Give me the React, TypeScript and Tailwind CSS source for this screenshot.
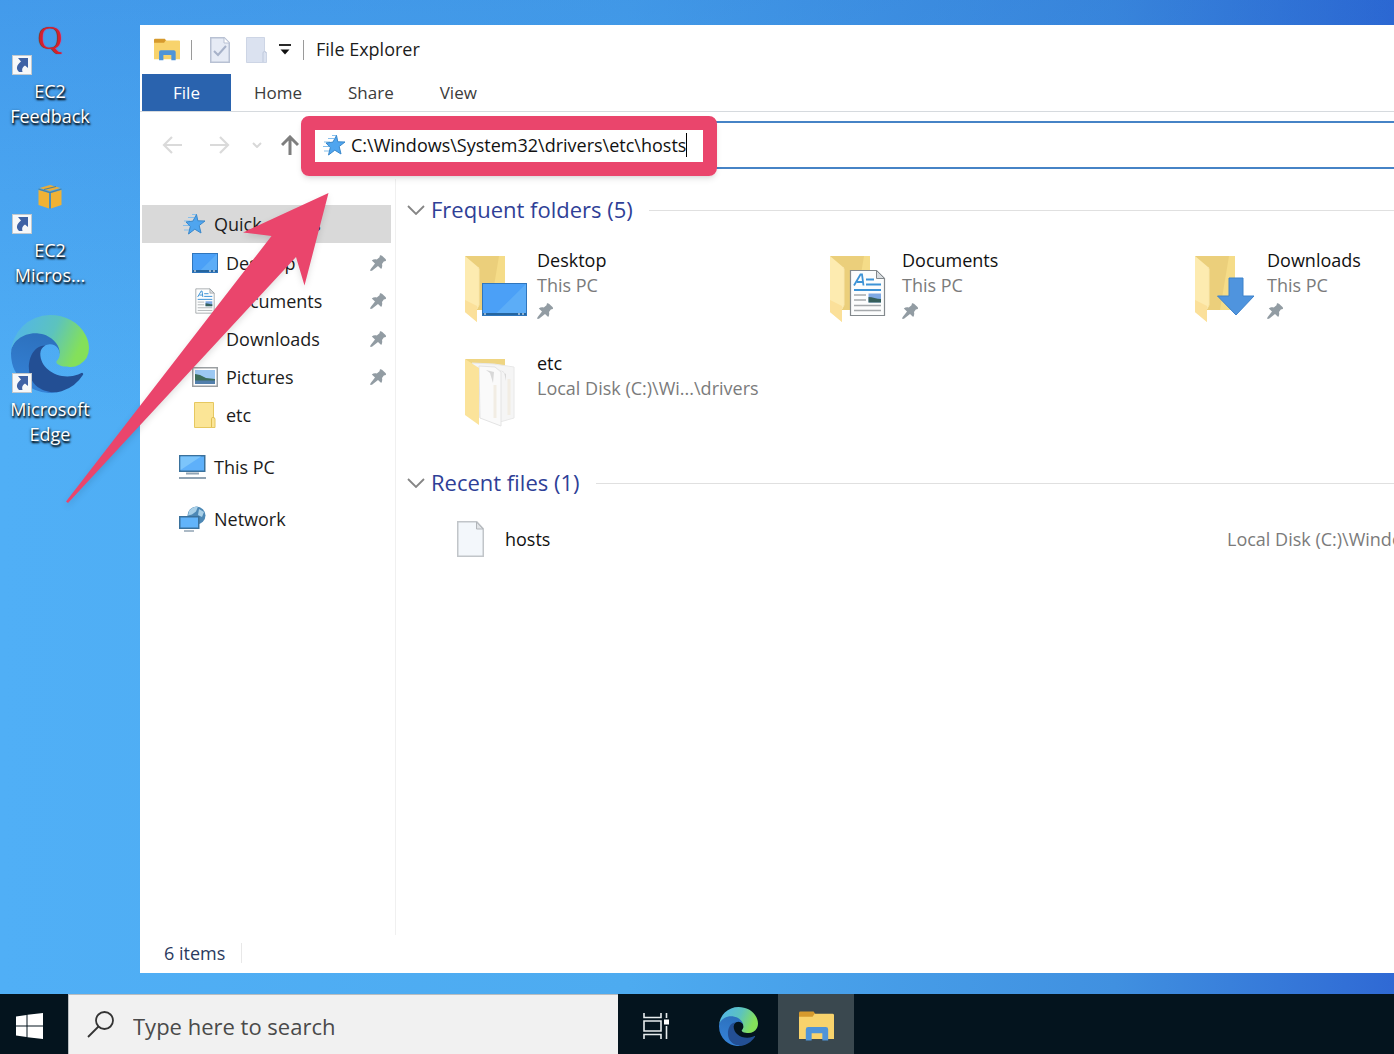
import type { ReactNode } from "react";

const tabs = ["Home", "Share", "View"];

function ShortcutBadge() {
  return (
    <svg className="absolute bottom-0 left-px w-5 h-5" viewBox="0 0 20 20">
      <rect x="0.5" y="0.5" width="19" height="19" fill="#f6f8fa" stroke="#c3c9ce" />
      <path d="M6 3h10v10l-3-2.500c-2.500 1.500-3.500 3.500-2.500 6.500H7C4 14 4 10.500 9 6.500z" fill="#3f62a5" />
    </svg>
  );
}

function EdgeLogo({ className, id }: { className: string; id: string }) {
  return (
    <svg className={className} viewBox="0 0 256 256">
      <defs>
        <linearGradient id={`${id}-top`} x1="0" y1="0.3" x2="1" y2="0.6">
          <stop offset="0" stopColor="#52b5ea" />
          <stop offset="0.5" stopColor="#5cc3be" />
          <stop offset="0.900" stopColor="#84e05a" />
        </linearGradient>
        <linearGradient id={`${id}-left`} x1="0.6" y1="0" x2="0.4" y2="1">
          <stop offset="0" stopColor="#2c6fbb" />
          <stop offset="1" stopColor="#3583d8" />
        </linearGradient>
      </defs>
      <path
        fill={`url(#${id}-left)`}
        d="M105.7 241.4a79.2 79.2 0 0 1-22.7-21.3 80.7 80.7 0 0 1 29.5-120c3.2-1.5 8.5-4.1 15.6-4a32.4 32.4 0 0 1 25.7 13 31.9 31.9 0 0 1 6.3 18.7c0-.2 24.5-79.6-80-79.6-43.9 0-80 41.7-80 78.2a130.2 130.2 0 0 0 12.1 56 128 128 0 0 0 156.4 67 75.5 75.5 0 0 1-62.8-8z"
      />
      <path
        fill="#234f94"
        d="M231 190.5c-3.4 1.8-6.900 3.400-10.500 4.700a101.900 101.900 0 0 1-35.900 6.400c-47.300 0-88.500-32.500-88.500-74.300a31.500 31.500 0 0 1 16.400-27.300c-42.800 1.800-53.800 46.400-53.800 72.500 0 73.900 68.100 81.400 82.800 81.400 7.900 0 19.800-2.300 27-4.600l1.300-.4a128.300 128.300 0 0 0 66.600-52.800 4 4 0 0 0-5.400-5.600z"
      />
      <path
        fill={`url(#${id}-top)`}
        d="M152.300 148.900c-.9 1-3.400 2.500-3.400 5.600 0 2.600 1.700 5.200 4.800 7.300 14.300 10 41.400 8.600 41.500 8.600a59.600 59.600 0 0 0 30.300-8.300 61.400 61.400 0 0 0 30.400-52.900c.3-22.400-8-37.300-11.300-43.900C223.500 23.900 177.700 0 128 0A128 128 0 0 0 0 126.200c.5-36.500 36.800-66 80-66 3.500 0 23.500.3 42 10.100 16.300 8.600 24.900 18.900 30.800 29.200 6.200 10.700 7.300 24.100 7.300 29.500 0 5.300-2.700 13.300-7.900 19.900z"
      />
    </svg>
  );
}

function ExplorerIcon({ className }: { className: string }) {
  return (
    <svg className={className} viewBox="0 0 36 30">
      <path d="M0 1.500Q0 0 1.500 0H15l2 3v4H0z" fill="#d69a2d" />
      <path d="M0 5.500h14l2-3h18.500Q36 2.500 36 4v24.500H0z" fill="#f8d36c" />
      <path d="M7 30V18.500Q7 16 9.500 16h18Q30 16 30 18.500V30h-6v-7.500H13V30z" fill="#4f94d8" />
    </svg>
  );
}

function StarIcon() {
  return (
    <svg className="w-6 h-6 shrink-0" viewBox="0 0 24 24">
      <path d="M2 9h6M1 13.500h6M2 18h5M6 5.500h6M10 2.500h5" stroke="#86bfec" strokeWidth="1.200" />
      <path
        d="M14.500 2.500l1.300 6.300 7.200.2-5.800 4.500 1.800 7.500-6.200-3.800L6.500 22l1.800-7.500L4 10l6.900-.9z"
        fill="#4fa5ef"
        stroke="#3a88cb"
        strokeWidth="1"
      />
    </svg>
  );
}

function PinIcon() {
  return (
    <svg className="w-4 h-4 shrink-0" viewBox="0 0 16 16">
      <path
        d="M10 .3Q11 0 12 .8L15.500 4q.8 1 .3 2l-2 .5-1.800 2.500c.5 2 .2 3.500-.8 5L8 11 2 15.800.2 16l.3-1.800L5 8.500 1.800 5.500c1.500-1.200 3-1.500 5-1L9.500 2.300z"
        fill="#929ca3"
      />
    </svg>
  );
}

function Chevron() {
  return (
    <svg className="w-[18px] h-[10px] shrink-0" viewBox="0 0 18 10" fill="none">
      <path d="M1 1l8 8 8-8" stroke="#858585" strokeWidth="1.800" />
    </svg>
  );
}

// Monitor drawing shared by the sidebar and the folder tile
function Screen({ x, y, w, h }: { x: number; y: number; w: number; h: number }) {
  return (
    <g>
      <rect x={x + 0.5} y={y + 0.5} width={w - 1} height={h - 1} fill="#4ba0f7" stroke="#2f76bd" />
      <path d={`M${x + w - 1} ${y + 1}v${h - 3}H${x + w * 0.3}z`} fill="#5cadf7" />
      <path d={`M${x + 1} ${y + h - 2}h${w - 2}`} stroke="#25659f" strokeWidth="2" />
      <path d={`M${x + 2} ${y + h - 2}h2M${x + w - 9} ${y + h - 2}h2M${x + w - 5} ${y + h - 2}h2`} stroke="#fff" />
    </g>
  );
}

function DocumentSheet() {
  return (
    <g>
      <path d="M.5.5h26l8 8v37H.5z" fill="#fcfdfd" stroke="#83898d" strokeWidth="1.200" />
      <path d="M26.500.5v8h8z" fill="#d9dde0" stroke="#83898d" />
      <path d="M4 15.500L10.500 4.500h1.500l1.500 11M7 12h6M16 9.500h8M16 14.500h15M4 20h27" stroke="#3d93d6" strokeWidth="1.800" fill="none" />
      <path d="M4 25h12M4 30h12M4 35.500h27M4 40.500h27" stroke="#a5a9ac" strokeWidth="1.500" />
      <path d="M18.500 23.500h12.500v9H18.500z" fill="#7ea9e4" />
      <path d="M18.500 27c4 0 8 2 12.500 2v3.500H18.500z" fill="#355f5b" />
    </g>
  );
}

function FolderBase() {
  return (
    <g>
      <path d="M1 2h40v54H13z" fill="#ebcf7b" />
      <path d="M41 2v54H26L35 2z" fill="#f5dc88" />
      <path d="M1 2l13 11 1 2v36l-2 4v13L1 58z" fill="#fdebb0" />
      <path d="M13 68L1 58V46l12 6z" fill="#fbe09a" />
      <path d="M14 13l1 2v36l-2 4" fill="none" stroke="#f9e6ac" />
    </g>
  );
}

const navIcons: Record<string, ReactNode> = {
  Desktop: (
    <svg className="w-[26px] h-5" viewBox="0 0 26 20">
      <Screen x={0} y={0} w={26} h={20} />
    </svg>
  ),
  Documents: (
    <svg className="w-5 h-[26px]" viewBox="-1 -1 37 48">
      <DocumentSheet />
    </svg>
  ),
  Downloads: (
    <svg className="w-[26px] h-6" viewBox="0 0 26 24">
      <path d="M9 1h7v11h5l-8.500 10L4 12h5z" fill="#4f94de" />
    </svg>
  ),
  Pictures: (
    <svg className="w-[26px] h-5" viewBox="0 0 26 20">
      <rect x="0.750" y="0.750" width="24.500" height="18.500" fill="#fff" stroke="#9b9fa2" strokeWidth="1.500" />
      <rect x="3" y="3" width="20" height="14" fill="#9cc8f2" />
      <path d="M3 7l5 1 6 3 9 1v2H3z" fill="#3d6d5a" />
      <path d="M3 13.500h20V17H3z" fill="#527fac" />
    </svg>
  ),
  etc: (
    <svg className="w-[22px] h-[26px]" viewBox="0 0 22 26">
      <path d="M.5.500h19v15l1.500 1v9H.5z" fill="#fbe596" stroke="#e6c860" />
      <path d="M17.500 25V16.500q0-1 1.500-1t1.500 1" fill="none" stroke="#e0bf52" />
    </svg>
  ),
};

const quickAccess = [
  { label: "Desktop", pinned: true },
  { label: "Documents", pinned: true },
  { label: "Downloads", pinned: true },
  { label: "Pictures", pinned: true },
  { label: "etc", pinned: false },
];

const folders = [
  {
    name: "Desktop",
    location: "This PC",
    pinned: true,
    icon: (
      <>
        <FolderBase />
        <Screen x={18} y={29} w={45} h={33} />
      </>
    ),
  },
  {
    name: "Documents",
    location: "This PC",
    pinned: true,
    icon: (
      <>
        <FolderBase />
        <g transform="translate(21 16)">
          <DocumentSheet />
        </g>
      </>
    ),
  },
  {
    name: "Downloads",
    location: "This PC",
    pinned: true,
    icon: (
      <>
        <FolderBase />
        <path d="M35 24h14v18h11L42 61 23.500 42H35z" fill="#4f94de" stroke="#3d82cb" />
      </>
    ),
  },
  {
    name: "etc",
    location: "Local Disk (C:)\\Wi...\\drivers",
    pinned: false,
    icon: (
      <>
        <path d="M1 2h40v12H10z" fill="#efd582" />
        <path d="M8 6l22 1 20 3v51l-14 4-20-4z" fill="#f5f5f5" stroke="#e8e8e8" />
        <path d="M15 9l16 1 6 5v54l-21-8z" fill="#fafafa" stroke="#e4e4e4" />
        <path d="M22 13l4 3 3 10 1-11zM34 12l6 3 2 9 0-7z" fill="#d8d8d8" />
        <path d="M31 28v33M45 22v36" stroke="#f2ede4" strokeWidth="3" />
        <path d="M1 2l14 9v57L1 58z" fill="#fbe39a" />
      </>
    ),
  },
];

const desktopIcons = [
  {
    lines: ["EC2", "Feedback"],
    art: (
      <span className="self-center font-['Liberation_Serif',serif] text-[34px] leading-none text-[#d3222c] [text-shadow:0_0_1px_#8c1f35]">
        Q
      </span>
    ),
  },
  {
    lines: ["EC2", "Micros..."],
    art: (
      <svg className="w-6 h-6 self-center" viewBox="0 0 24 24">
        <path d="M12 0l10.500 3L12 6 1.500 3z" fill="#e9ad3a" />
        <path d="M.5 5L11 8v15.500L.5 20zM23.500 5L13 8v15.500L23.500 20z" fill="#f0b234" />
        <path d="M.5 4L12 7.500 23.500 4M12 7.500V23.500M6 4.500L18 1.500" stroke="#4f8298" strokeWidth="1.200" fill="none" />
      </svg>
    ),
  },
  {
    lines: ["Microsoft", "Edge"],
    art: <EdgeLogo className="w-[78px] h-[78px] shrink-0" id="desk" />,
  },
];

function DesktopIcons() {
  return (
    <div className="w-[140px] shrink-0 flex flex-col gap-[30px]">
      {desktopIcons.map(({ lines, art }) => (
        <button key={lines.join(" ")} className="w-[100px] flex flex-col items-center gap-1">
          <span className="relative w-[78px] h-[75px] flex items-end justify-center">
            {art}
            <ShortcutBadge />
          </span>
          <span className="text-[18px] leading-[25px] text-white [text-shadow:1px_2px_2px_#000,0_1px_3px_#000a]">
            {lines[0]}
            <br />
            {lines[1]}
          </span>
        </button>
      ))}
    </div>
  );
}

function TitleBar() {
  return (
    <div className="h-[49px] pl-[14px] flex items-center text-[18px]">
      <ExplorerIcon className="w-[26px] h-[23px]" />
      <span className="w-px h-5 ml-[11px] bg-[#9a9a9a]" />
      <button aria-label="Properties" className="ml-[18px]">
        <svg className="w-5 h-[26px]" viewBox="0 0 20 26">
          <path d="M.750.750h13.500l5 5v19.500H.750z" fill="#e6ebf5" stroke="#b8c1d3" strokeWidth="1.500" />
          <path d="M14 1v5h5" fill="#fff" stroke="#b8c1d3" />
          <path d="M4 14l4 4 8-9" fill="none" stroke="#a7b2c9" strokeWidth="2" />
        </svg>
      </button>
      <button aria-label="New folder" className="ml-4">
        <svg className="w-[21px] h-[26px]" viewBox="0 0 21 26">
          <path d="M.5.500h18v14l2 1v10H.5z" fill="#dbe2f0" stroke="#cdd5e5" />
          <path d="M17 25v-9q0-1.500 1.500-1.500T20 16" fill="none" stroke="#bfc9dc" />
        </svg>
      </button>
      <button aria-label="Customize toolbar" className="ml-3">
        <svg className="w-3 h-[11px]" viewBox="0 0 12 11">
          <path d="M0 1h12" stroke="#111" strokeWidth="1.800" />
          <path d="M1.500 5.500h9L6 10.500z" fill="#111" />
        </svg>
      </button>
      <span className="w-px h-5 ml-3 bg-[#9a9a9a]" />
      <h1 className="ml-3 text-[#1c1c1c]">File Explorer</h1>
    </div>
  );
}

function AddressBar() {
  return (
    <div className="mt-[9px] h-12 flex items-center text-[18px]">
      <button aria-label="Back" className="ml-[22px]">
        <svg className="w-5 h-[18px]" viewBox="0 0 20 18" fill="none" stroke="#dadada" strokeWidth="2.200">
          <path d="M20 9H2M10 1L2 9l8 8" />
        </svg>
      </button>
      <button aria-label="Forward" className="ml-7">
        <svg className="w-5 h-[18px]" viewBox="0 0 20 18" fill="none" stroke="#dadada" strokeWidth="2.200">
          <path d="M0 9h18M10 1l8 8-8 8" />
        </svg>
      </button>
      <button aria-label="Recent locations" className="ml-[22px]">
        <svg className="w-[10px] h-[6px]" viewBox="0 0 10 6" fill="none" stroke="#d8d8d8" strokeWidth="2">
          <path d="M1 1l4 4 4-4" />
        </svg>
      </button>
      <button aria-label="Up" className="ml-[19px]">
        <svg className="w-[18px] h-5" viewBox="0 0 18 20" fill="none" stroke="#7e7e7e" strokeWidth="3">
          <path d="M9 20V2M1 10l8-8 8 8" />
        </svg>
      </button>
      <div className="relative flex-1 self-stretch ml-[9px] pl-3 flex items-center border-y-2 border-l-2 border-[#4683c6]">
        <StarIcon />
        <input
          aria-label="Address"
          defaultValue="C:\Windows\System32\drivers\etc\hosts"
          className="field-sizing-content ml-[5px] text-[#111] outline-none"
        />
        <span className="w-px h-6 bg-black" />
        {/* highlight frame */}
        <div className="absolute -left-[9px] -top-[7px] w-[416px] h-[60px] rounded-lg border-[14px] border-[#ea456c] shadow-md" />
      </div>
    </div>
  );
}

function Sidebar() {
  return (
    <nav className="w-64 shrink-0 border-r border-[#f0f0f0] pl-[2px] pr-1 pt-[26px] flex flex-col gap-[14px] text-[18px] text-[#1c1c1c]">
      <div>
        <button className="w-full h-[38px] pl-10 flex items-center gap-2 bg-[#d9d9d9]">
          <StarIcon />
          Quick access
        </button>
        <ul className="mt-px">
          {quickAccess.map(({ label, pinned }) => (
            <li key={label} className="h-[38px] pl-[50px] pr-[5px] flex items-center justify-between">
              <button className="flex items-center gap-2">
                <span className="w-[26px] flex justify-center">{navIcons[label]}</span>
                {label}
              </button>
              {pinned && <PinIcon />}
            </li>
          ))}
        </ul>
      </div>
      <button className="h-[38px] pl-[37px] flex items-center gap-2">
        <svg className="w-[27px] h-6" viewBox="0 0 27 24">
          <rect x="0.750" y="0.750" width="25" height="15.500" fill="#5eb0fa" stroke="#3a719c" strokeWidth="1.500" />
          <path d="M1.500 15V1.500H22z" fill="#7cc5fb" />
          <path d="M7 18.500h13M0 23h27" stroke="#90a3b3" strokeWidth="1.800" />
        </svg>
        This PC
      </button>
      <button className="h-[38px] pl-[37px] flex items-center gap-2">
        <svg className="w-[27px] h-[26px]" viewBox="0 0 27 26">
          <circle cx="17.500" cy="9.500" r="9" fill="#4d88b5" />
          <path d="M10 5q4-5 9-4.500l-2 5-4 3-4 1zM20 3l5 3-2 5-4-2z" fill="#a9d0e8" />
          <rect x="0.750" y="10.750" width="19" height="11.500" fill="#62b4fa" stroke="#3a719c" strokeWidth="1.500" />
          <path d="M5 25h10" stroke="#90a3b3" strokeWidth="1.500" />
        </svg>
        Network
      </button>
    </nav>
  );
}

function GroupHeading({ children }: { children: ReactNode }) {
  return (
    <div className="h-[30px] flex items-center">
      <Chevron />
      <h2 className="ml-[6px] pb-[2px] text-[22px] text-[#2f3f97] whitespace-nowrap">{children}</h2>
      <span className="flex-1 h-px ml-4 bg-[#e0e0e0]" />
    </div>
  );
}

function Content() {
  return (
    <main className="flex-1 min-w-0 overflow-hidden pl-[11px] pt-4 text-[18px] leading-[25px]">
      <GroupHeading>Frequent folders (5)</GroupHeading>
      <div className="mt-[23px] pl-[57px] grid grid-cols-[repeat(3,365px)]">
        {folders.map(({ name, location, pinned, icon }) => (
          <button key={name} className="h-[103px] flex items-start gap-[9px] text-left">
            <svg className="w-16 h-[72px] mt-[6px]" viewBox="0 0 64 72">
              {icon}
            </svg>
            <span className="flex flex-col">
              <span className="text-[#111]">{name}</span>
              <span className="text-[#7b7b7b]">{location}</span>
              {pinned && (
                <span className="h-[25px] flex items-center">
                  <PinIcon />
                </span>
              )}
            </span>
          </button>
        ))}
      </div>
      <div className="mt-[14px]">
        <GroupHeading>Recent files (1)</GroupHeading>
      </div>
      <div className="mt-4 h-[50px] pl-[50px] flex items-center">
        <button className="w-[770px] shrink-0 flex items-center gap-[21px] text-[#111]">
          <svg className="w-[27px] h-9" viewBox="0 0 27 36">
            <path d="M.750.750h19l6.500 7v27.500H.750z" fill="#f3f7fb" stroke="#c1c5c9" strokeWidth="1.500" />
            <path d="M19.500 1v7h6.500z" fill="#e1e4e7" stroke="#b1b5b9" />
          </svg>
          hosts
        </button>
        <span className="text-[#7b7b7b] whitespace-nowrap">Local Disk (C:)\Windows\System32\drivers\etc</span>
      </div>
    </main>
  );
}

function ExplorerWindow() {
  return (
    <section className="flex-1 min-w-0 mt-[25px] mb-[21px] flex flex-col bg-white">
      <TitleBar />
      <div className="h-[38px] pl-[2px] flex items-stretch border-b border-[#d6dade] text-[17px] text-[#3b3b3b]">
        <button className="w-[89px] bg-[#2a63ae] text-white">File</button>
        {tabs.map((tab) => (
          <button key={tab} className="px-[23px]">
            {tab}
          </button>
        ))}
      </div>
      <AddressBar />
      <div className="mt-[10px] flex-1 flex">
        <Sidebar />
        <Content />
      </div>
      <footer className="h-[38px] pl-6 pb-[2px] flex items-center text-[18px] text-[#2b3a5e]">
        6 items
        <span className="w-px h-5 ml-4 bg-[#e8e8e8]" />
      </footer>
    </section>
  );
}

function Taskbar() {
  return (
    <footer className="h-[60px] flex bg-[#04141e]">
      <button aria-label="Start" className="w-[68px] flex items-center justify-center pr-[9px] pt-1">
        <svg className="w-[27px] h-[26px]" viewBox="0 0 27 26" fill="#fff">
          <path d="M0 3.500l10.500-1.500v10.500H0zM11.500 1.800L27 0v12.500H11.500zM0 13.500h10.500V24L0 22.500zM11.500 13.500H27V26l-15.500-1.800z" />
        </svg>
      </button>
      <label className="w-[550px] pl-[18px] flex items-center bg-[#f1f1f1] border-t border-l border-[#b9bdc0]">
        <svg className="w-[27px] h-[27px] shrink-0" viewBox="0 0 27 27" fill="none" stroke="#333" strokeWidth="1.800">
          <circle cx="17.500" cy="9.500" r="8.500" />
          <path d="M11.500 15.500L1 26" />
        </svg>
        <input
          aria-label="Search"
          placeholder="Type here to search"
          className="ml-[19px] pt-1 flex-1 min-w-0 text-[22px] placeholder:text-[#4a4a4a] outline-none"
        />
      </label>
      <div className="flex gap-1">
        <button aria-label="Task View" className="w-[76px] flex items-center justify-center pt-1">
          <svg className="w-[26px] h-[26px]" viewBox="0 0 26 26" fill="none" stroke="#e8edef" strokeWidth="1.600">
            <path d="M1 0v4.500h17V0M1 8h17v10H1zM1 26v-4.500h17V26M23.500 0v5M23.500 13v13" />
            <rect x="21" y="6.500" width="5" height="5" fill="#fff" stroke="none" />
          </svg>
        </button>
        <button aria-label="Microsoft Edge" className="w-[76px] flex items-center justify-center pl-1 pt-1">
          <EdgeLogo className="w-[39px] h-[39px]" id="task" />
        </button>
        <button aria-label="File Explorer" className="w-[76px] flex items-center justify-center bg-[#3a484f] pt-1">
          <ExplorerIcon className="w-[35px] h-[30px]" />
        </button>
      </div>
    </footer>
  );
}

export default function App() {
  return (
    <div className="relative min-h-screen overflow-hidden flex flex-col font-['Open_Sans','Noto_Sans',sans-serif] bg-[linear-gradient(to_bottom,#1f62cc44,transparent_40%),linear-gradient(to_right,#50aff6_0%,#4dabf0_45%,#4090e0_80%,#2f69d4_100%)]">
      <div className="flex-1 flex">
        <DesktopIcons />
        <ExplorerWindow />
      </div>
      <Taskbar />
      {/* arrow pointing at the address bar */}
      <svg
        className="absolute left-[66px] top-[193px] w-[264px] h-[312px] pointer-events-none drop-shadow-md"
        viewBox="0 0 264 312"
      >
        <path d="M262.500 0L177 39.500l28.500 3.500L0 308.500l2 1.500L230 64l8.500 28.500z" fill="#ea456c" />
      </svg>
    </div>
  );
}
